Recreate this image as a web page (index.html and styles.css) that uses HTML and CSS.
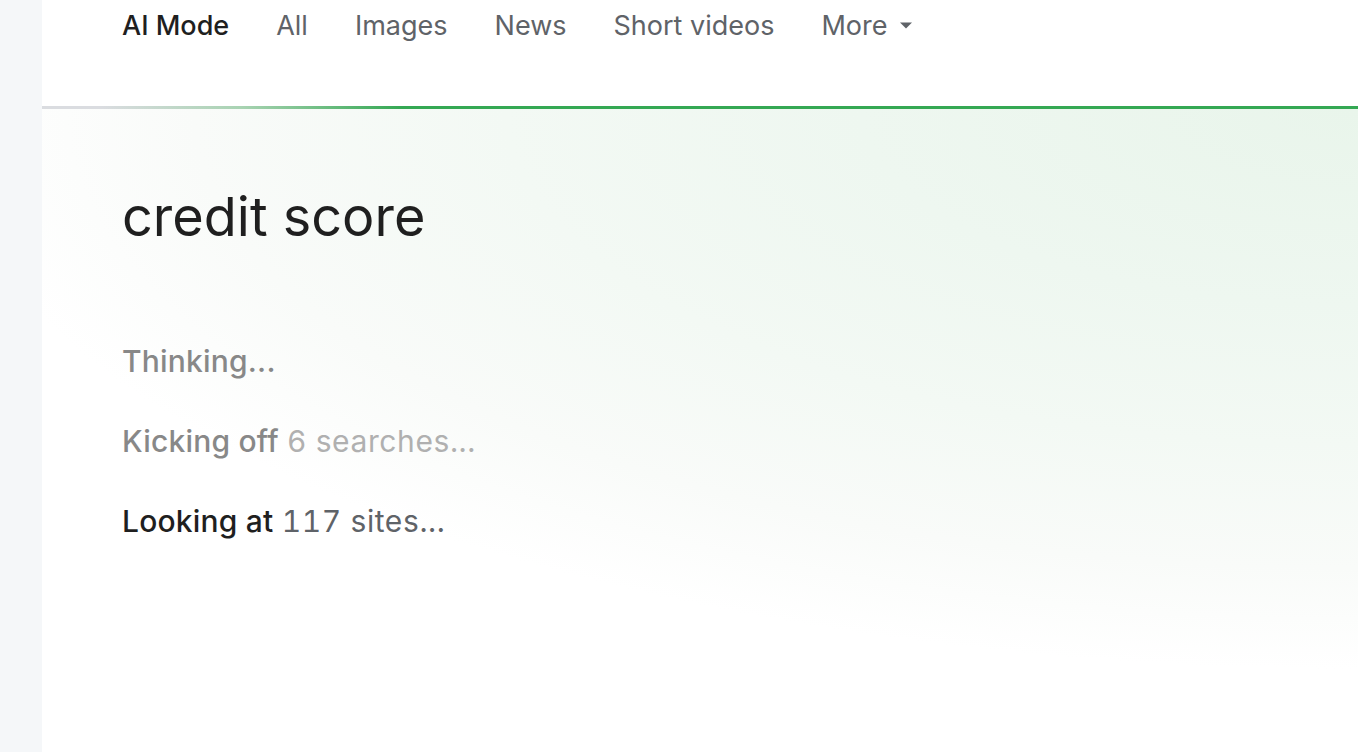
FILE: index.html
```html
<!DOCTYPE html>
<html lang="en">
<head>
  <title>credit score - AI Mode</title>
  <meta charset="utf-8" />
  <link rel="stylesheet" href="styles.css">
</head>
<body>
  <div class="page">
    <div class="rail"></div>
    <div class="main">
      <!-- tabs -->
      <div class="tabs">
        <span class="tab active">AI Mode</span>
        <span class="tab">All</span>
        <span class="tab">Images</span>
        <span class="tab">News</span>
        <span class="tab">Short videos</span>
        <span class="tab more">More
          <svg class="caret" width="14" height="8" viewBox="0 0 14 8"><path d="M1 1.5h12L7 7.5z" fill="#5f6368"/></svg>
        </span>
      </div>
      <div class="progress"></div>
      <!-- answer area -->
      <div class="answer">
        <h1 class="query">credit score</h1>
        <div class="steps">
          <div class="step done">Thinking...</div>
          <div class="step done">Kicking off <span class="count">6 searches...</span></div>
          <div class="step now">Looking at <span class="count">117 sites...</span></div>
        </div>
      </div>
    </div>
  </div>
</body>
</html>
```

FILE: styles.css
```css
html, body{
  margin: 0;
  height: 100%;
}
body{
  font-family: Inter, "Liberation Sans", sans-serif;
  background: #fff;
  overflow: hidden;
}
.page{
  display: flex;
  height: 100%;
}
.rail{
  width: 42px;
  flex: none;
  background-color: #f5f7f9;
}
.main{
  flex: 1;
  display: flex;
  flex-direction: column;
}
.tabs{
  display: flex;
  align-items: flex-start;
  gap: 47px;
  height: 106px;
  padding: 9px 0 0 80px;
  box-sizing: border-box;
  font-size: 27px;
  color: #5f6368;
}
.tab{
  line-height: 34px;
}
.tab.active{
  color: #1f1f1f;
  font-weight: 500;
}
.more{
  display: flex;
  align-items: center;
  gap: 12px;
}
.caret{
  margin-top: -2px;
}
.progress{
  height: 3px;
  background: linear-gradient(90deg, #dadce0 0px, #dadce0 60px, #a8d3b2 200px, #34a853 360px);
}
.answer{
  flex: 1;
  padding: 74px 0 0 80px;
  background:
    radial-gradient(ellipse 1420px 560px at 100% 0%, #e9f5eb 0%, #eef7f0 35%, #f3f9f4 60%, #f9fbf9 82%, rgba(255,255,255,0) 100%),
    #fff;
}
.query{
  margin: 0 0 91px 0;
  font-size: 54px;
  font-weight: 400;
  line-height: 68px;
  color: #1f1f1f;
}
.steps{
  display: flex;
  flex-direction: column;
  gap: 42px;
}
.step{
  font-size: 30px;
  line-height: 38px;
  font-weight: 500;
  letter-spacing: 0.2px;
}
.step .count{
  font-variant-numeric: tabular-nums;
  letter-spacing: 0.6px;
}
.step.done{
  color: #888;
}
.step.done .count{
  color: #b0b0b0;
  font-weight: 400;
}
.step.now{
  color: #1f1f1f;
}
.step.now .count{
  color: #5f6368;
  font-weight: 400;
}
```
